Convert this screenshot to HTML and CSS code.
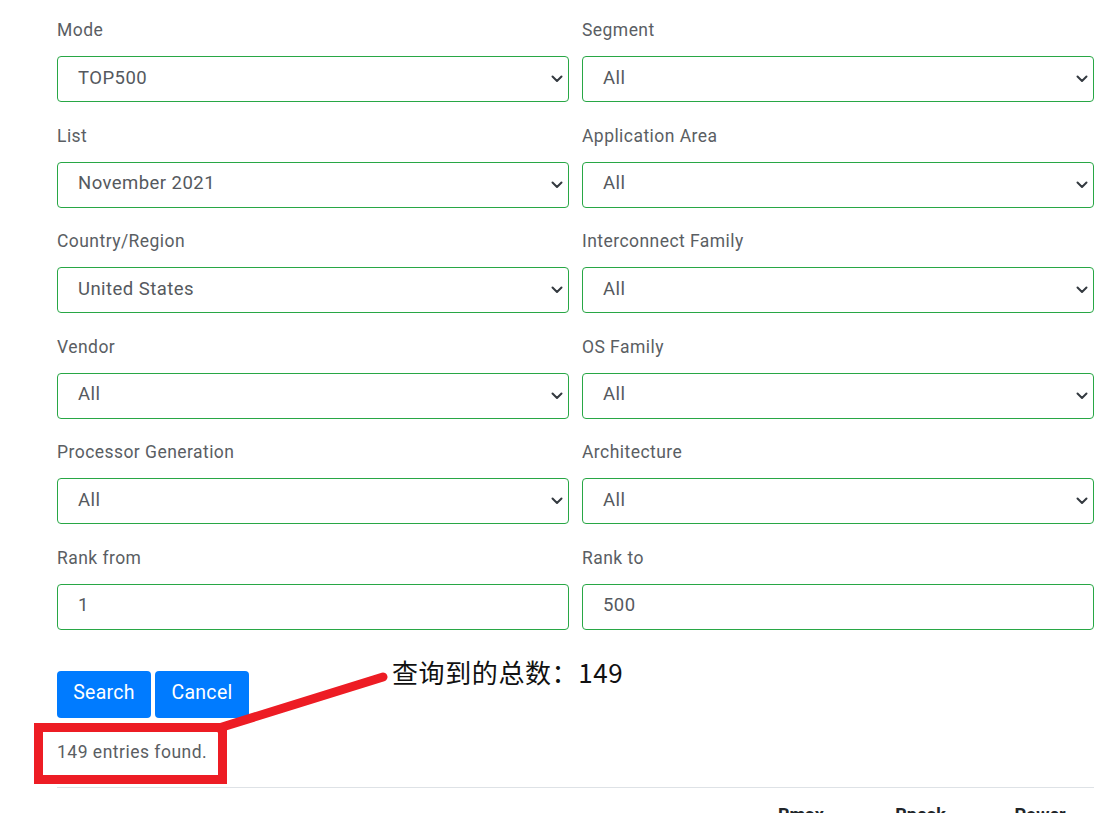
FILE: index.html
```html
<!DOCTYPE html>
<html lang="en">
<head>
<meta charset="utf-8">
<title>TOP500 List</title>
<link rel="stylesheet" href="styles.css">
</head>
<body>
<div class="page">
  <form class="filter-form">
    <div class="grid">
      <div class="group">
        <label class="lbl">Mode</label>
        <div class="field select"><span>TOP500</span><svg class="chev" viewBox="0 0 12 8"><path d="M1.5 1.5 L6 6 L10.5 1.5" /></svg></div>
      </div>
      <div class="group">
        <label class="lbl">Segment</label>
        <div class="field select"><span>All</span><svg class="chev" viewBox="0 0 12 8"><path d="M1.5 1.5 L6 6 L10.5 1.5" /></svg></div>
      </div>
      <div class="group">
        <label class="lbl">List</label>
        <div class="field select"><span>November 2021</span><svg class="chev" viewBox="0 0 12 8"><path d="M1.5 1.5 L6 6 L10.5 1.5" /></svg></div>
      </div>
      <div class="group">
        <label class="lbl">Application Area</label>
        <div class="field select"><span>All</span><svg class="chev" viewBox="0 0 12 8"><path d="M1.5 1.5 L6 6 L10.5 1.5" /></svg></div>
      </div>
      <div class="group">
        <label class="lbl">Country/Region</label>
        <div class="field select"><span>United States</span><svg class="chev" viewBox="0 0 12 8"><path d="M1.5 1.5 L6 6 L10.5 1.5" /></svg></div>
      </div>
      <div class="group">
        <label class="lbl">Interconnect Family</label>
        <div class="field select"><span>All</span><svg class="chev" viewBox="0 0 12 8"><path d="M1.5 1.5 L6 6 L10.5 1.5" /></svg></div>
      </div>
      <div class="group">
        <label class="lbl">Vendor</label>
        <div class="field select"><span>All</span><svg class="chev" viewBox="0 0 12 8"><path d="M1.5 1.5 L6 6 L10.5 1.5" /></svg></div>
      </div>
      <div class="group">
        <label class="lbl">OS Family</label>
        <div class="field select"><span>All</span><svg class="chev" viewBox="0 0 12 8"><path d="M1.5 1.5 L6 6 L10.5 1.5" /></svg></div>
      </div>
      <div class="group">
        <label class="lbl">Processor Generation</label>
        <div class="field select"><span>All</span><svg class="chev" viewBox="0 0 12 8"><path d="M1.5 1.5 L6 6 L10.5 1.5" /></svg></div>
      </div>
      <div class="group">
        <label class="lbl">Architecture</label>
        <div class="field select"><span>All</span><svg class="chev" viewBox="0 0 12 8"><path d="M1.5 1.5 L6 6 L10.5 1.5" /></svg></div>
      </div>
      <div class="group">
        <label class="lbl">Rank from</label>
        <div class="field"><span>1</span></div>
      </div>
      <div class="group">
        <label class="lbl">Rank to</label>
        <div class="field"><span>500</span></div>
      </div>
    </div>
    <div class="buttons">
      <button type="button" class="btn">Search</button>
      <button type="button" class="btn">Cancel</button>
    </div>
  </form>
  <p class="found">149 entries found.</p>
  <div class="table-head">
    <span class="th th-rmax">Rmax</span>
    <span class="th th-rpeak">Rpeak</span>
    <span class="th th-power">Power</span>
  </div>
</div>

<svg class="annot-line" width="1117" height="813" viewBox="0 0 1117 813">
  <line x1="219" y1="728" x2="383" y2="677" />
</svg>
<div class="annot-box"></div>
<div class="annot-text">查询到的总数：149</div>
</body>
</html>
```

FILE: styles.css
```css
* { box-sizing: border-box; }

html, body {
  margin: 0;
  padding: 0;
  background: #fff;
  overflow: hidden;
}

body {
  font-family: Roboto, "Liberation Sans", sans-serif;
  color: #495057;
  height: 813px;
}

.page {
  padding: 17px 23px 0 57px;
}

.grid {
  display: grid;
  grid-template-columns: 512px 512px;
  column-gap: 13px;
}

.group {
  display: flex;
  flex-direction: column;
  margin-bottom: 20.6px;
}

.lbl {
  font-size: 17.5px;
  line-height: 27px;
  height: 27px;
  margin-bottom: 12px;
  color: #5a5e63;
  letter-spacing: 0.45px;
}

.field {
  height: 46px;
  border: 1px solid #28a745;
  border-radius: 4px;
  display: flex;
  align-items: center;
  justify-content: space-between;
  padding: 0 5px 3px 20px;
  font-size: 18.5px;
  letter-spacing: 0.45px;
  color: #55595e;
}

.chev {
  width: 12px;
  height: 8px;
  margin-top: 3px;
  fill: none;
  stroke: #343a40;
  stroke-width: 2;
  stroke-linecap: round;
  stroke-linejoin: round;
}

.buttons {
  display: flex;
  gap: 4px;
  margin-top: 20px;
}

.btn {
  height: 47px;
  width: 94px;
  background: #007bff;
  color: #fff;
  border: none;
  border-radius: 4px;
  font-family: Roboto, "Liberation Sans", sans-serif;
  font-size: 19.5px;
  letter-spacing: 0.3px;
  padding: 0 0 3px 0;
}

.found {
  margin: 21px 0 0 0;
  font-size: 17.5px;
  letter-spacing: 0.5px;
  line-height: 27px;
  color: #5a5e63;
  padding-bottom: 21px;
  border-bottom: 1px solid #dee2e6;
}

.table-head {
  height: 40px;
  padding: 16px 0 0 721px;
  display: flex;
  font-size: 18px;
  font-weight: bold;
  color: #212529;
}

.th-rmax { width: 118px; }
.th-rpeak { width: 120px; }
.th-power { width: 80px; }

/* annotation overlay */
.annot-line {
  position: absolute;
  left: 0;
  top: 0;
  pointer-events: none;
}

.annot-line line {
  stroke: #ed1c24;
  stroke-width: 9;
  stroke-linecap: round;
}

.annot-box {
  position: absolute;
  left: 34px;
  top: 723px;
  width: 193px;
  height: 61px;
  border: 9px solid #ed1c24;
}

.annot-text {
  position: absolute;
  left: 392px;
  top: 654px;
  font-family: "Noto Sans CJK SC", sans-serif;
  font-size: 26px;
  line-height: 36px;
  letter-spacing: 0.6px;
  color: #111;
}
```
